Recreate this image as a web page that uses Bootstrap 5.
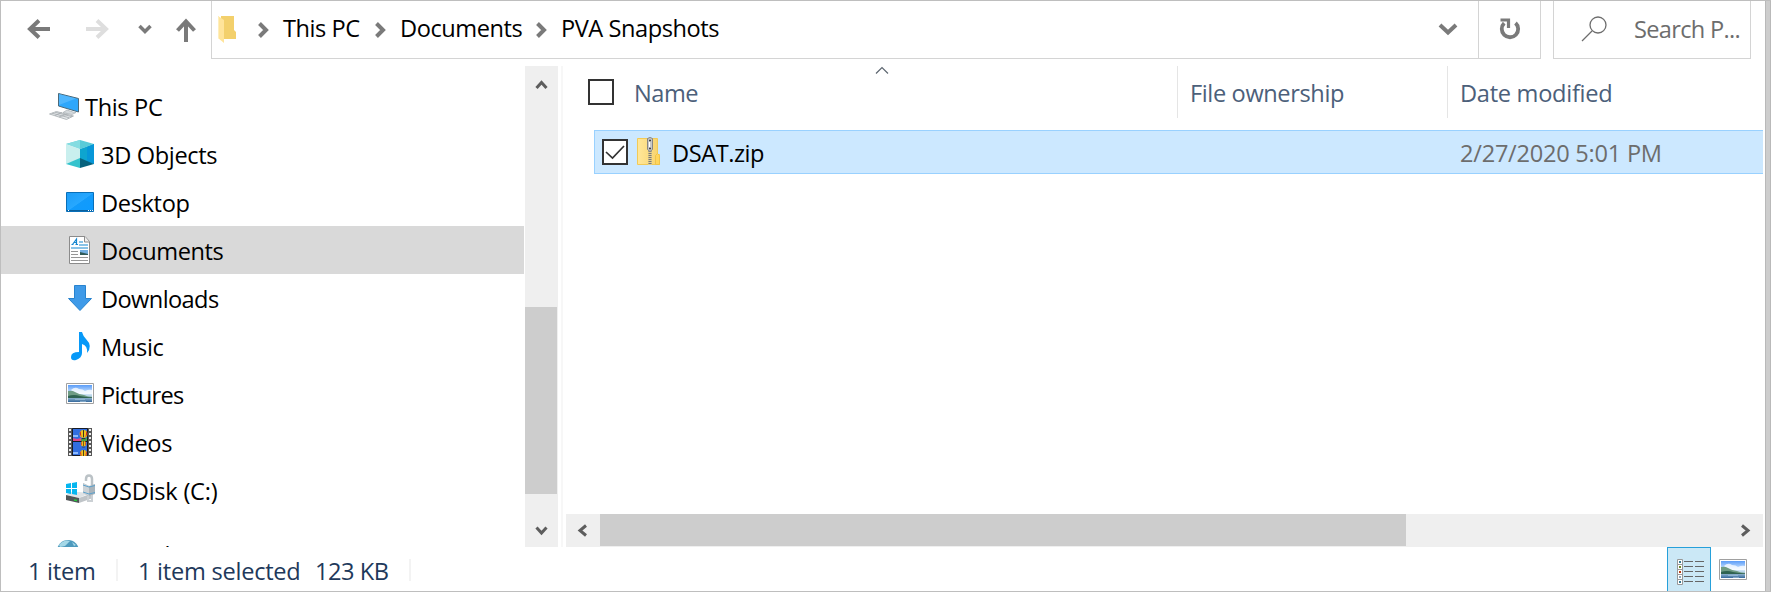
<!DOCTYPE html>
<html lang="en">
<head>
<meta charset="utf-8">
<title>PVA Snapshots</title>
<link href="https://cdn.jsdelivr.net/npm/bootstrap@5.3.0/dist/css/bootstrap.min.css" rel="stylesheet">
<style>
body{font-family:"Open Sans","Noto Sans",sans-serif;font-size:23.6px;line-height:32px;color:#000;background:#fff;letter-spacing:-.45px;overflow:hidden}
svg{display:block;flex:none}
.window{height:592px;border:1px solid #bebebe;border-right:0}
.edge{width:6px;background:#cdcdcd;border-left:1px solid #b9b9b9;border-right:1px solid #b9b9b9}
.topbar{height:58px}
.topbar span{margin-top:-3px}
.nav-tools{width:210px}
.address{width:1330px;border:1px solid #d4d4d4;border-top:0}
.crumb-arrow{width:11px;height:16px}
.crumb{margin-left:14px}
.refresh{width:62px;border-left:1px solid #d4d4d4}
.search-box{width:198px;margin-left:12px;border:1px solid #d4d4d4;border-top:0;color:#6d6d6d}
.search-box span{margin-left:27px;margin-top:-2px;letter-spacing:-.7px}
.main-area{height:481px;margin-top:7px}
.tree{width:524px;padding-top:16px}
.tree-item{height:48px;padding:2px 0 0 64px;margin-right:1px;letter-spacing:-.35px}
.tree-root{padding-left:48px}
.tree-item .pic{width:29px;margin:-2px 7px 0 0}
.tree-root .pic{width:31px;margin-right:5px}
.selected-item{background:#d9d9d9}
.network{margin-top:17px}
.network-label{margin-top:-2px}
.tight{letter-spacing:-.75px}
.vscroll{width:33px;background:#efefef}
.vthumb{width:32px;height:187px;background:#cdcdcd}
.split{width:2px;margin-left:3px;margin-right:3px;background:#f7f7f7}
.col-head{height:52px;color:#4c607a}
.sep{border-left:1px solid #e5e5e5;padding:1px 0 0 12px}
.check{width:26px;height:26px;border:2px solid #333;background:#fff;flex:none}
.file-row{margin:12px 0 0 28px;height:44px;width:1169px;background:#cce8ff;border:1px solid #99d1ff;border-right:0}
.date{color:#6d6d6d;letter-spacing:-.25px}
.hscroll{height:33px;width:1197px;background:#efefef}
.hthumb{width:806px;height:32px;background:#cdcdcd}
.status{height:44px;color:#1e395b}
.status-text{margin-top:8px}
.tick{width:2px;height:22px;margin-top:12px;background:#f3f3f3}
.view-on{width:44px;height:44px;background:#cbe8f6;border:1px solid #26a0da;border-bottom:0}
</style>
</head>
<body>
<svg width="0" height="0" class="position-absolute">
<defs>
<linearGradient id="sky" x2="0" y2="1"><stop stop-color="#5a9cf8"/><stop offset=".5" stop-color="#d8ecff"/><stop offset=".7" stop-color="#a9c8dc"/><stop offset="1" stop-color="#34689c"/></linearGradient>
<linearGradient id="blue" x2="1" y2="1"><stop stop-color="#1c9cf6"/><stop offset=".5" stop-color="#27a8ff"/><stop offset=".52" stop-color="#129bfb"/><stop offset="1" stop-color="#0d9bff"/></linearGradient>
<linearGradient id="gold" x2="1"><stop stop-color="#ffe79a"/><stop offset="1" stop-color="#f7d26b"/></linearGradient>
<symbol id="arrow" viewBox="0 0 11 16"><path fill="none" stroke="#7a7a7a" stroke-width="4" d="M1.500 1.500L8 8l-6.500 6.500"/></symbol>
<symbol id="photo" viewBox="0 0 28 21"><path fill="#fff" stroke="#a0a0a0" d="M.5.5h27v20H.5z"/><path fill="url(#sky)" d="M2 2h24v17H2z"/><path fill="#fff" opacity=".75" d="M5 7q4-4 8-1 4 0 6 2 4-2 7-1v4H9z"/><path fill="#6f9c84" d="M2 8q4-1 7 1 5 3 9 3 4 2 8 2v1H2z"/><path fill="#2f6350" d="M2 13q6-2 12 0 6 1 12 1.500v.5H2z"/><path stroke="#a8c9de" d="M9 16.500h10M14 18.500h6" opacity=".6"/></symbol>
<symbol id="balloon" viewBox="0 0 10 11"><circle cx="5" cy="4.300" r="4.300" fill="#f0c41c"/><path fill="#d3232a" d="M2.500.8Q-1 4 3 8 1.500 3 2.500.8M7.500.8q3.500 3.200-.5 7.200 1.500-5 .5-7.200"/><path stroke="#222" d="M5 0v8M3 9.500h4"/></symbol>
</defs>
</svg>
<div class="window d-flex">
<div class="d-flex flex-column flex-grow-1">
<header class="topbar d-flex">
<div class="nav-tools d-flex">
<svg width="210" height="57" viewBox="1 1 210 57" fill="none" stroke="#7a7a7a" stroke-width="4"><path d="M50 29H31M39 20.500L30 29l9 8.500"/><path stroke="#dedede" d="M86 29h19M97 20.500l9 8.500-9 8.500"/><path stroke-width="3.500" d="M139.500 26l5.500 5.500 5.500-5.500"/><path d="M186 42V22M177.500 30.500l8.500-9 8.500 9"/></svg>
</div>
<div class="address d-flex align-items-center">
<svg class="ms-1" width="22" height="29" viewBox="0 0 22 29"><path fill="#f3d06c" d="M5 1h13v14l2 2v7H5z"/><path fill="#ffe49a" d="M2 1l6 4v23l-6-5z"/><path fill="#ffefbd" d="M2 1l1 .5v22L2 23z"/></svg>
<svg class="crumb-arrow" style="margin-left:20px"><use href="#arrow"/></svg>
<span class="crumb text-nowrap" style="width:92px">This PC</span>
<svg class="crumb-arrow"><use href="#arrow"/></svg>
<span class="crumb text-nowrap" style="width:136px">Documents</span>
<svg class="crumb-arrow"><use href="#arrow"/></svg>
<span class="crumb text-nowrap">PVA Snapshots</span>
<svg class="ms-auto" width="20" height="14" viewBox="0 0 20 14" fill="none" stroke="#7a7a7a" stroke-width="4" style="margin-right:20px"><path d="M2 2l8 7.500L18 2"/></svg>
<div class="refresh h-100 d-flex align-items-center justify-content-center"><svg width="22" height="24" viewBox="0 0 22 24" fill="none" stroke="#7a7a7a" stroke-width="3.800"><path d="M16.500 5a8.200 8.200 0 1 1-11.300.2"/><path d="M1.500 2h8v8" stroke-width="3.200"/></svg></div>
</div>
<div class="search-box d-flex align-items-center"><svg width="26" height="26" viewBox="0 0 26 26" fill="none" stroke="#6d6d6d" stroke-width="1.300" style="margin-left:27px;margin-bottom:2px"><circle cx="17" cy="9" r="8"/><path d="M11 15L1 25"/></svg><span class="text-nowrap">Search P...</span></div>
</header>
<div class="main-area d-flex">
<nav class="tree overflow-hidden">
<div class="tree-item tree-root d-flex align-items-center"><span class="pic"><svg width="31" height="28" viewBox="0 0 31 28"><path fill="#2ea7fb" stroke="#4b6979" d="M9.500 1.500l20 5v13.500l-20-6z"/><path fill="#65bfff" d="M10 2l17 4.500L10 13z" opacity=".6"/><path fill="#d5dadd" stroke="#a9b0b5" stroke-width=".7" d="M18 18l6 2 3 .5-4 2-9-2z"/><path fill="#e4e7e9" stroke="#a4abaf" stroke-width=".8" d="M.5 22l7-2.500 17 4.500-7 3.500z"/><path stroke="#a4abaf" fill="none" stroke-width=".8" d="M3 21.200l17 4.500M6 20.200l17 4.500M6 23.500l7-3M10 25l8-3"/></svg></span>This PC</div>
<div class="tree-item d-flex align-items-center"><span class="pic"><svg width="29" height="28" viewBox="0 0 29 28"><path fill="#59cbd8" d="M15 0l14 4-14 5L1 4z"/><path fill="#83dce1" d="M1 4l14-4v9z"/><path fill="#c9efee" d="M1 4l14 5v10L1 24z"/><path fill="#0ea5cf" d="M29 4L15 9v10l14 5z"/><path fill="#0797d8" d="M29 4v20l-7-2V7z"/><path fill="#35c3cd" d="M1 24l14-6v10z"/><path fill="#07627d" d="M29 24l-14-6v10z"/></svg></span>3D Objects</div>
<div class="tree-item d-flex align-items-center"><span class="pic"><svg width="29" height="20" viewBox="0 0 29 20"><path fill="url(#blue)" stroke="#086fb9" d="M1.500.5h27v19h-27z"/><path stroke="#0b5f9b" d="M2 18.500h26"/><path stroke="#fff" stroke-dasharray="1 1" d="M23 18.500h5M3 18.500h1"/></svg></span>Desktop</div>
<div class="tree-item selected-item d-flex align-items-center"><span class="pic"><svg width="29" height="28" viewBox="0 0 29 28"><path fill="#fff" stroke="#8b8b8b" d="M4.500.5H20l4.500 5v22h-20z"/><path fill="#eee" stroke="#8b8b8b" d="M19.500.5v5.500h5"/><path fill="none" stroke="#1587d0" stroke-width="1.200" d="M6.500 8.500h2M7.500 8.500L11.500 3v5.500M10.500 8.500h2.500M9.500 6.500h2M14 6h4M14 9h9M6 12h17"/><path stroke="#969696" d="M6 15.500h7M6 18.500h7M6 21.500h17M6 24.500h17"/><path fill="#73afe2" d="M15 14h8v5h-8z"/><path fill="#315b58" d="M15 16l8 2v1h-8z"/></svg></span><span style="letter-spacing:-.45px">Documents</span></div>
<div class="tree-item d-flex align-items-center"><span class="pic"><svg width="29" height="28" viewBox="0 0 29 28"><path fill="#3f9ae8" stroke="#2883cf" d="M9.500 1.500h11v13h6L15 26.500 3.500 14.500h6z"/></svg></span><span style="letter-spacing:-.6px">Downloads</span></div>
<div class="tree-item d-flex align-items-center"><span class="pic"><svg width="29" height="30" viewBox="0 0 29 30"><path fill="#0799f8" d="M14 1h3q1 4 4 7 7 7 1 14 1-7-5-9v9q0 5-6 7-5 1-5-3 0-5 8-5z"/></svg></span>Music</div>
<div class="tree-item d-flex align-items-center"><span class="pic"><svg width="28" height="21" style="margin-left:1px;margin-bottom:1px"><use href="#photo"/></svg></span><span class="tight">Pictures</span></div>
<div class="tree-item d-flex align-items-center"><span class="pic"><svg width="29" height="28" viewBox="0 0 29 28" style="margin-bottom:1px"><path fill="#575757" d="M3 0h24v28H3z"/><path stroke="#eee" stroke-width="2" stroke-dasharray="2 2" d="M5 1v27M25 1v27"/><path fill="#326ee0" stroke="#171b25" d="M7.500.5h15v13h-15zM7.500 13.500h15v14h-15z"/><path fill="#8dbbff" d="M8 7h5v2H8zM8 24h5v2H8z"/><path fill="#e0478a" d="M8 10l4 1 4-1v3H8z"/><path fill="#4ba548" d="M16 11l6-1v3h-6z"/><use href="#balloon" x="14" y="2" width="9" height="10"/><use href="#balloon" x="15" y="13" width="7" height="7"/><use href="#balloon" x="14" y="22" width="9" height="9"/></svg></span>Videos</div>
<div class="tree-item d-flex align-items-center"><span class="pic"><svg width="30" height="30" viewBox="0 0 30 30" style="margin-bottom:2px"><path fill="#dfe3e6" d="M1 21l5-3h8l11 1-11 5z"/><path fill="#505557" d="M1 21l13 3v5L1 26z"/><path fill="#bfc4c8" d="M14 24l14-5v5l-14 5z"/><path fill="#06b6ef" d="M1 10l5-1v5H1zM7 9l5-1v6H7zM1 15h5v5l-5-1zM7 15h5v6l-5-1z"/><path stroke="#27ce3d" stroke-width="1.500" d="M9 26l3 .5"/><path fill="none" stroke="#bbc2c6" stroke-width="2.500" d="M21 7V5q0-3.500 3-3.500T27 5v6"/><path fill="#aab4bb" d="M18 9l6 3 6-2v10l-6 2-6-3z"/><path fill="#ccd2d6" d="M18 9l6 3v10l-6-3z"/><path stroke="#5ca1cc" fill="none" d="M18 11l6 2 6-1.500M18 18l6 2 6-1.500"/><path fill="none" stroke="#cbd0d4" stroke-width="2" d="M23 22v5h4v-6"/></svg></span><span style="letter-spacing:-.25px">OSDisk (C:)</span></div>
<div class="tree-item tree-root network d-flex align-items-center"><span class="pic"><svg width="31" height="30" viewBox="0 0 31 30"><circle cx="19" cy="11" r="11" fill="#4e9abd"/><path fill="#a5d8e7" d="M10 5q5-6 11-4l-5 5-5 1zM23 2l4 3-2 1z"/></svg></span><span class="network-label">Network</span></div>
</nav>
<div class="vscroll d-flex flex-column align-items-start">
<svg width="33" height="241" viewBox="0 0 33 241"><path fill="none" stroke="#5d5d5d" stroke-width="3" d="M11.500 22l5-5.500 5 5.500"/></svg>
<div class="vthumb flex-shrink-0"></div>
<svg class="mt-auto" width="33" height="33" viewBox="0 0 33 33"><path fill="none" stroke="#5d5d5d" stroke-width="3" d="M11.500 13.500l5 5.500 5-5.500"/></svg>
</div>
<div class="split"></div>
<section class="d-flex flex-column flex-grow-1">
<div class="col-head d-flex">
<div class="d-flex align-items-center" style="width:611px;padding-left:22px"><span class="check"></span><span style="width:61px;margin:1px 0 0 20px">Name</span><svg class="align-self-start" width="14" height="9" viewBox="0 0 14 9" fill="none" stroke="#5d6670" stroke-width="1.200" style="margin-left:180px"><path d="M1 7.500l6-6 6 6"/></svg></div>
<div class="sep d-flex align-items-center" style="width:270px;letter-spacing:-.38px">File ownership</div>
<div class="sep d-flex align-items-center" style="letter-spacing:-.28px">Date modified</div>
</div>
<div class="file-row d-flex align-items-center">
<span class="check" style="margin-left:7px"><svg width="22" height="22" viewBox="0 0 22 22" fill="none" stroke="#333" stroke-width="1.700"><path d="M2 11l6.500 6L20 5"/></svg></span>
<svg width="24" height="29" viewBox="0 0 24 29" style="margin-left:9px;margin-bottom:2px"><path fill="url(#gold)" stroke="#f2ca57" d="M.5 1.500h20v16h2v10H.5z"/><path fill="#ffd65d" stroke="#efc34b" d="M18.500 27.500v-9l2-2 2 2v9z"/><path fill="#e4cf8c" d="M11 13h4v15h-4z"/><path stroke="#777" stroke-width="3" stroke-dasharray="1 1" d="M13 14v14"/><path fill="#c8c8c8" stroke="#858585" d="M10.500 1.500q2.500-2 5 0v11l-2.500 2-2.500-2z"/><path stroke="#444" stroke-width="1.500" d="M12 3.500h2M12 11.500h2"/><path stroke="#fff" d="M12.500 5v5"/></svg>
<span style="width:788px;margin:2px 0 0 11px">DSAT.zip</span><span class="date" style="margin-top:2px">2/27/2020 5:01 PM</span>
</div>
<div class="hscroll d-flex mt-auto">
<svg width="34" height="33" viewBox="0 0 34 33"><path fill="none" stroke="#5d5d5d" stroke-width="3" d="M20 11.500L14 16.500l6 5"/></svg>
<div class="hthumb"></div>
<svg class="ms-auto" width="34" height="33" viewBox="0 0 34 33"><path fill="none" stroke="#5d5d5d" stroke-width="3" d="M13 11.500l6 5-6 5"/></svg>
</div>
</section>
</div>
<footer class="status d-flex">
<span class="status-text" style="width:88px;margin-left:27px;letter-spacing:-.25px">1 item</span><span class="tick"></span>
<span class="status-text" style="width:177px;margin-left:20px;letter-spacing:-.25px">1 item selected</span><span class="status-text" style="width:94px">123 KB</span><span class="tick"></span>
<div class="view-on ms-auto"><svg width="42" height="42" viewBox="0 0 42 42"><path fill="#fff" stroke="#999" d="M9.500 11.500h5v5h-5zM9.500 16.500h5v5h-5zM9.500 21.500h5v5h-5zM9.500 26.500h5v5h-5zM9.500 31.500h5v5h-5z"/><path stroke="#666" d="M16 13.500h9M27 13.500h9M16 18.500h9M27 18.500h9M16 23.500h9M27 23.500h9M16 28.500h9M27 28.500h9M16 33.500h9M27 33.500h9"/><path stroke="#347891" stroke-width="2" d="M11 14h2M11 34h2"/><path stroke="#6a8926" stroke-width="2" d="M11 19h2"/><path stroke="#b83c13" stroke-width="2" d="M11 24h2"/><path stroke="#87a4b8" stroke-width="2" d="M11 29h2"/></svg></div>
<svg width="28" height="21" style="margin:12px 18px 0 8px"><use href="#photo"/></svg>
</footer>
</div>
<div class="edge"></div>
</div>
<script src="https://cdn.jsdelivr.net/npm/bootstrap@5.3.0/dist/js/bootstrap.bundle.min.js"></script>
</body>
</html>
